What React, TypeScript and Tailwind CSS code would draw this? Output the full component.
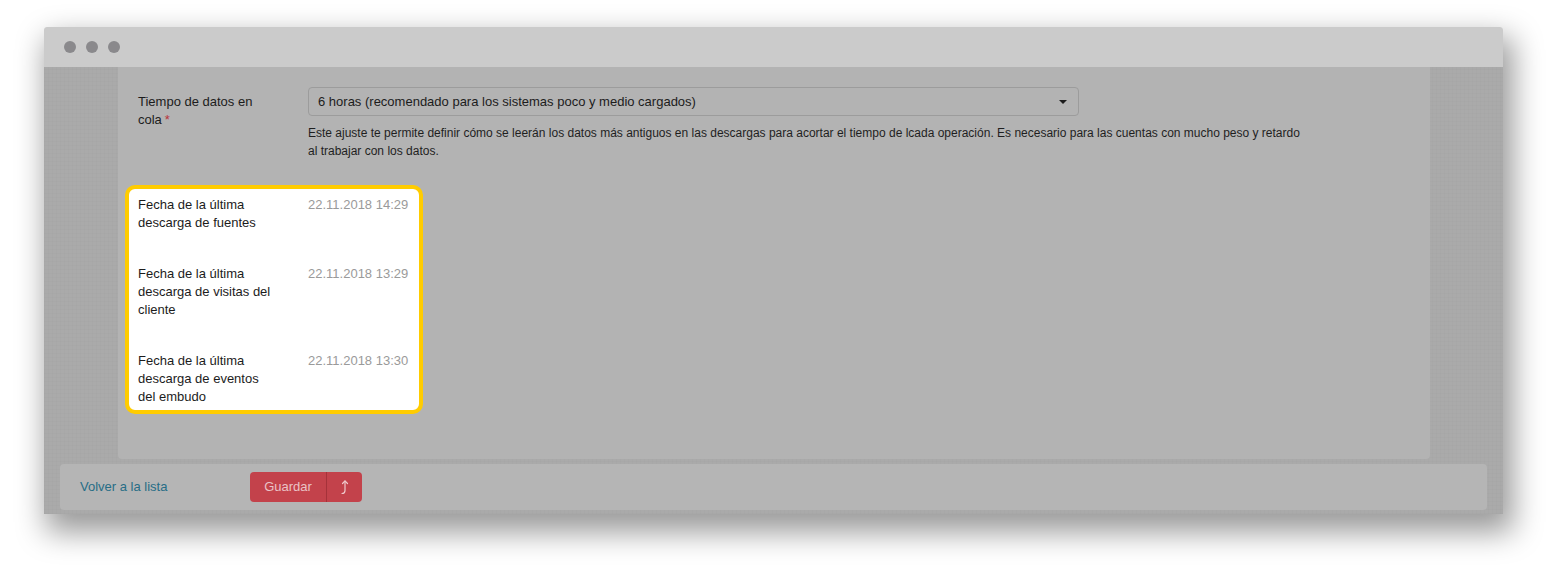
const rows = [
  { label: "Fecha de la última descarga de fuentes", date: "22.11.2018 14:29" },
  { label: "Fecha de la última descarga de visitas del cliente", date: "22.11.2018 13:29" },
  { label: "Fecha de la última descarga de eventos del embudo", date: "22.11.2018 13:30" },
];

function ReturnIcon() {
  return (
    <svg width="10" height="16" viewBox="0 0 10 16" fill="none" stroke="#efc9cc" strokeWidth="1.2" strokeLinecap="round" strokeLinejoin="round">
      <path d="M2 14.5 C4 14.5 5 13.5 5 11.5 V2" />
      <path d="M2.5 4.5 L5 2 L7.5 4.5" />
    </svg>
  );
}

export default function App() {
  return (
    <div className="h-[586px] w-[1567px] bg-white pl-[44px] pt-[27px] font-['Liberation_Sans',Arial,sans-serif]">
      <div className="flex h-[487px] w-[1459px] flex-col rounded-t-[3px] shadow-[6px_14px_30px_4px_rgba(0,0,0,0.4)]">
        <div className="flex h-10 items-center gap-[10px] rounded-t-[3px] bg-[#cbcbcb] pl-[20px]">
          <span className="h-3 w-3 rounded-full bg-[#8a898c]" />
          <span className="h-3 w-3 rounded-full bg-[#8a898c]" />
          <span className="h-3 w-3 rounded-full bg-[#8a898c]" />
        </div>

        <div className="flex flex-1 flex-col bg-[#aaaaaa] bg-[repeating-linear-gradient(0deg,rgba(0,0,0,0.012)_0px,rgba(0,0,0,0.012)_1px,transparent_1px,transparent_4px),repeating-linear-gradient(90deg,rgba(0,0,0,0.012)_0px,rgba(0,0,0,0.012)_1px,transparent_1px,transparent_4px)]">
          <div className="ml-[74px] h-[392px] w-[1312px] rounded-b-[4px] bg-[#b3b3b3] pt-[20px]">
            <div className="flex pl-[20px] text-[13px] leading-[18px] text-[#1c1c1c]">
              <div className="w-[170px] pr-[30px] pt-[6px]">
                Tiempo de datos en cola<span className="ml-[3px] text-[#b8333c]">*</span>
              </div>
              <div>
                <div className="flex h-[29px] w-[771px] items-center justify-between rounded-[4px] border border-[#9c9c9c] pl-[9px] pr-[11px]">
                  <span>6 horas (recomendado para los sistemas poco y medio cargados)</span>
                  <span className="h-0 w-0 border-x-[4px] border-t-[4px] border-x-transparent border-t-[#1c1c1c]" />
                </div>
                <p className="mt-[8px] w-[1000px] text-[12px] leading-[18px] text-[#1f1f1f]">
                  Este ajuste te permite definir cómo se leerán los datos más antiguos en las descargas para acortar el tiempo de lcada operación. Es necesario para las cuentas con mucho peso y retardo al trabajar con los datos.
                </p>
              </div>
            </div>

            <div className="ml-[7px] mt-[25px] flex h-[229px] w-[298px] flex-col gap-[33px] rounded-[10px] border-4 border-[#ffcc00] bg-white pl-[9px] pt-[7px] text-[13px] leading-[18px]">
              {rows.map((r) => (
                <div key={r.date} className="flex">
                  <div className="w-[170px] pr-[30px] text-[#1c1c1c]">{r.label}</div>
                  <div className="text-[#9a9a9a]">{r.date}</div>
                </div>
              ))}
            </div>
          </div>

          <div className="mx-[16px] mt-[5px] flex h-[46px] items-center rounded-[4px] bg-[#b5b5b5] pl-[20px] text-[13px]">
            <a className="w-[170px] text-[#276d86]">Volver a la lista</a>
            <div className="flex h-[30px] overflow-hidden rounded-[4px] bg-[#c3424b]">
              <button className="w-[77px] border-r border-[#a5323a] text-[#eac3c6]">Guardar</button>
              <button className="flex w-[35px] items-center justify-center">
                <ReturnIcon />
              </button>
            </div>
          </div>
        </div>
      </div>
    </div>
  );
}
